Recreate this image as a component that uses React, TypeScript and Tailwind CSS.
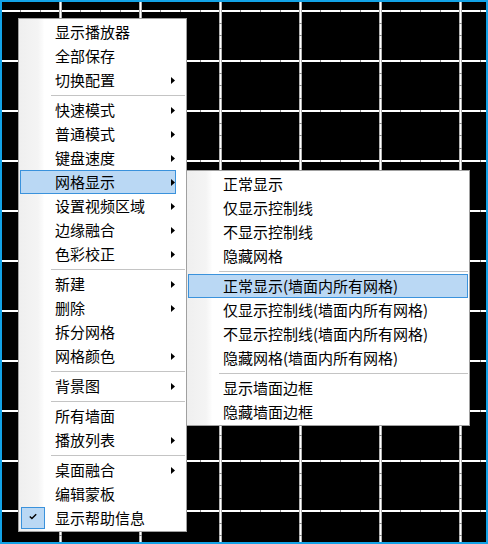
import React from 'react';

type Entry = { label: string; arrow?: boolean; active?: boolean; checked?: boolean } | 'sep';

const mainItems: Entry[] = [
  { label: '显示播放器' },
  { label: '全部保存' },
  { label: '切换配置', arrow: true },
  'sep',
  { label: '快速模式', arrow: true },
  { label: '普通模式', arrow: true },
  { label: '键盘速度', arrow: true },
  { label: '网格显示', arrow: true, active: true },
  { label: '设置视频区域', arrow: true },
  { label: '边缘融合', arrow: true },
  { label: '色彩校正', arrow: true },
  'sep',
  { label: '新建', arrow: true },
  { label: '删除', arrow: true },
  { label: '拆分网格' },
  { label: '网格颜色', arrow: true },
  'sep',
  { label: '背景图', arrow: true },
  'sep',
  { label: '所有墙面' },
  { label: '播放列表', arrow: true },
  'sep',
  { label: '桌面融合', arrow: true },
  { label: '编辑蒙板' },
  { label: '显示帮助信息', checked: true },
];

const subItems: Entry[] = [
  { label: '正常显示' },
  { label: '仅显示控制线' },
  { label: '不显示控制线' },
  { label: '隐藏网格' },
  'sep',
  { label: '正常显示(墙面内所有网格)', active: true },
  { label: '仅显示控制线(墙面内所有网格)' },
  { label: '不显示控制线(墙面内所有网格)' },
  { label: '隐藏网格(墙面内所有网格)' },
  'sep',
  { label: '显示墙面边框' },
  { label: '隐藏墙面边框' },
];

function Grid() {
  const hLines: number[] = [];
  for (let k = 0; k <= 10; k++) hLines.push(10 + 50 * k);
  const vLines: number[] = [];
  for (let k = 0; k <= 5; k++) vLines.push(60 + 80 * k);
  const hTicks: number[] = [];
  for (let x = 0; x < 488; x += 20) if ((x - 60) % 80 !== 0) hTicks.push(x);
  const vTicks: number[] = [];
  for (let y = 10; y < 544; y += 12.5) if ((y - 10) % 50 !== 0) vTicks.push(Math.round(y));
  return (
    <svg className="absolute left-0 top-0" width={488} height={544} viewBox="0 0 488 544">
      <rect x={0} y={0} width={488} height={544} fill="#000" />
      {hLines.map((y) => (
        <rect key={'h' + y} x={2} y={y} width={484} height={2} fill="#ffffff" />
      ))}
      {vLines.map((x) => (
        <g key={'v' + x}>
          <rect x={x - 1} y={2} width={3} height={540} fill="#b4b4b4" />
          <rect x={x} y={2} width={1} height={540} fill="#ffffff" />
        </g>
      ))}
      {hLines.map((y) =>
        hTicks.map((x) => <rect key={'ht' + y + '-' + x} x={x} y={y} width={1} height={2} fill="#8a8a8a" />)
      )}
      {vLines.map((x) =>
        vTicks.map((y) => <rect key={'vt' + x + '-' + y} x={x - 1} y={y} width={3} height={1} fill="#8a8a8a" />)
      )}
    </svg>
  );
}

function Arrow() {
  return (
    <svg className="ml-auto shrink-0" width={4} height={7} viewBox="0 0 4 7">
      <polygon points="0,0 4,3.5 0,7" fill="#000" />
    </svg>
  );
}

function Check() {
  return (
    <svg width={8} height={7} viewBox="0 0 8 7">
      <path d="M0.8 3.6 L2.9 5.6 L7.2 1.2" stroke="#000" strokeWidth={1.4} fill="none" />
    </svg>
  );
}

function MenuRows({ items, main }: { items: Entry[]; main: boolean }) {
  return (
    <>
      {items.map((it, i) => {
        if (it === 'sep') {
          return (
            <div key={'s' + i} className="h-[6px] pt-[3px] pl-[31px]">
              <div className="h-px bg-[#c4c4c4]" />
            </div>
          );
        }
        return (
          <div
            key={i}
            className={`relative flex h-[24px] items-center border pl-[34px] ${main ? 'mr-[9px]' : ''} ${
              it.active ? 'border-[#3a92dc] bg-[#bad8f4]' : 'border-transparent'
            }`}
          >
            {it.checked && (
              <div className="absolute left-0 top-0 flex h-[22px] w-[24px] items-center justify-center border border-[#3a92dc] bg-[#bad8f4] pb-[3px]">
                <Check />
              </div>
            )}
            <span className="whitespace-nowrap leading-[22px]">{it.label}</span>
            {it.arrow && <Arrow />}
          </div>
        );
      })}
    </>
  );
}

export default function App() {
  return (
    <div className="relative h-[544px] w-[488px] overflow-hidden bg-black font-['Noto_Sans_CJK_SC','Noto_Sans',sans-serif] text-[15px] text-black">
      <Grid />
      <div className="pointer-events-none absolute inset-0 border-2 border-[#12a2e6]" />

      <div className="absolute left-[18px] top-[18px] h-[514px] w-[169px] border border-[#a0a0a0] bg-[linear-gradient(to_right,#efefef_0px,#f4f4f4_19px,#fcfcfc_24px,#ffffff_25px)] p-[1px]">
        <MenuRows items={mainItems} main={true} />
      </div>

      <div className="absolute left-[186px] top-[170px] h-[256px] w-[284px] border border-[#a0a0a0] bg-[linear-gradient(to_right,#efefef_0px,#f4f4f4_19px,#fcfcfc_24px,#ffffff_25px)] p-[1px]">
        <MenuRows items={subItems} main={false} />
      </div>
    </div>
  );
}
